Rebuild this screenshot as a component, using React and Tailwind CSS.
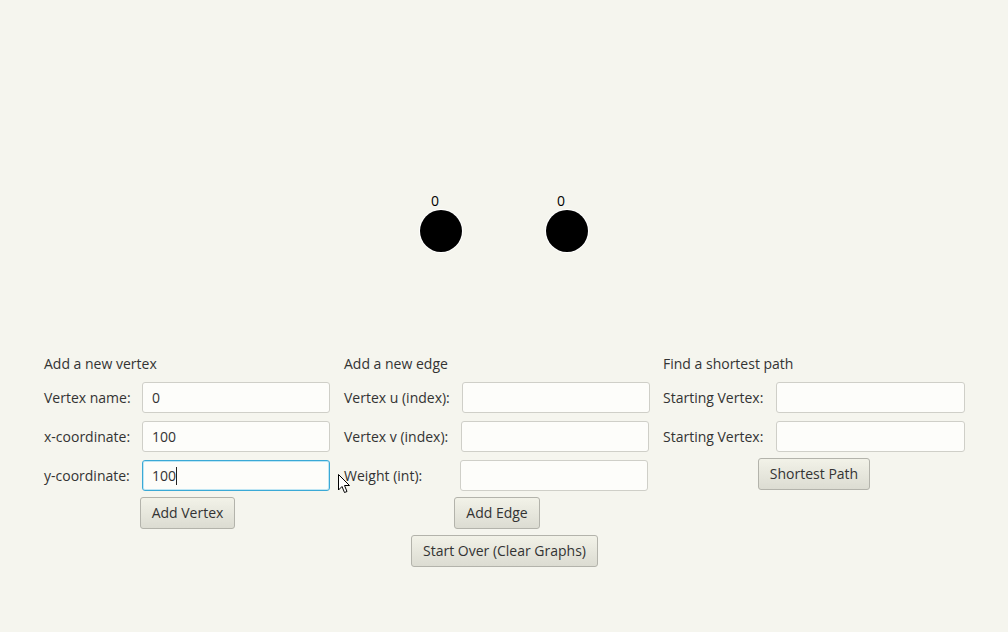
import React from 'react';

const Field = ({ label, labelW, inputW, value, focused }) => (
  <div className="flex items-center h-[31px]">
    <div className="shrink-0 text-[14px]" style={{ width: labelW }}>{label}</div>
    <div
      className={
        'h-[31px] rounded-[3px] bg-[#fdfdfa] flex items-center px-[9px] text-[14px] ' +
        (focused
          ? 'border border-[#3aa9d6] shadow-[inset_0_0_0_1px_#bfe6f4]'
          : 'border border-[#cfcfc8]')
      }
      style={{ width: inputW }}
    >
      {value}
      {focused && <span className="inline-block w-px h-[18px] bg-[#222]" />}
    </div>
  </div>
);

const Btn = ({ children }) => (
  <button className="h-[32px] px-[11px] rounded-[3px] border border-[#b3b3ab] bg-gradient-to-b from-[#f2f2e8] to-[#dcdcd2] text-[14px] text-[#333] leading-none">
    {children}
  </button>
);

export default function App() {
  return (
    <div
      className="w-[1008px] h-[632px] bg-[#f5f5ee] text-[#333] relative overflow-hidden"
      style={{ fontFamily: '"Open Sans", "Noto Sans", sans-serif' }}
    >
      {/* graph canvas */}
      <div className="relative h-[355px]">
        <div className="absolute left-[431px] top-[194px] text-[14px] text-black leading-none">0</div>
        <div className="absolute left-[420px] top-[210px] w-[42px] h-[42px] rounded-full bg-black ring-1 ring-white" />
        <div className="absolute left-[557px] top-[194px] text-[14px] text-black leading-none">0</div>
        <div className="absolute left-[546px] top-[210px] w-[42px] h-[42px] rounded-full bg-black ring-1 ring-white" />
      </div>

      <div className="flex pl-[44px]">
        <div className="w-[286px] flex flex-col">
          <div className="h-[18px] text-[14px] leading-[18px] mb-[9px]">Add a new vertex</div>
          <div className="flex flex-col gap-[8px]">
            <Field label="Vertex name:" labelW={98} inputW={188} value="0" />
            <Field label="x-coordinate:" labelW={98} inputW={188} value="100" />
            <Field label="y-coordinate:" labelW={98} inputW={188} value="100" focused />
          </div>
          <div className="flex justify-center mt-[6px] pl-[1px]">
            <Btn>Add Vertex</Btn>
          </div>
        </div>

        <div className="w-[306px] ml-[14px] flex flex-col">
          <div className="h-[18px] text-[14px] leading-[18px] mb-[9px]">Add a new edge</div>
          <div className="flex flex-col gap-[8px]">
            <Field label="Vertex u (index):" labelW={118} inputW={188} value="" />
            <Field label="Vertex v (index):" labelW={117} inputW={188} value="" />
            <Field label="Weight (int):" labelW={116} inputW={188} value="" />
          </div>
          <div className="flex justify-center mt-[6px]">
            <Btn>Add Edge</Btn>
          </div>
        </div>

        <div className="w-[302px] ml-[13px] flex flex-col">
          <div className="h-[18px] text-[14px] leading-[18px] mb-[9px]">Find a shortest path</div>
          <div className="flex flex-col gap-[8px]">
            <Field label="Starting Vertex:" labelW={113} inputW={189} value="" />
            <Field label="Starting Vertex:" labelW={113} inputW={189} value="" />
          </div>
          <div className="flex justify-center mt-[6px]">
            <Btn>Shortest Path</Btn>
          </div>
        </div>
      </div>

      <div className="flex justify-center mt-[6px] pl-[1px]">
        <Btn>Start Over (Clear Graphs)</Btn>
      </div>

      {/* mouse pointer */}
      <svg className="absolute left-[338px] top-[474px]" width="13" height="20" viewBox="0 0 13 20">
        <path d="M0.5 0.5 L0.5 16 L4 12.5 L6.5 18.5 L9 17.5 L6.5 11.5 L11.5 11.5 Z" fill="#fff" stroke="#000" strokeWidth="1" strokeLinejoin="round" />
      </svg>
    </div>
  );
}
